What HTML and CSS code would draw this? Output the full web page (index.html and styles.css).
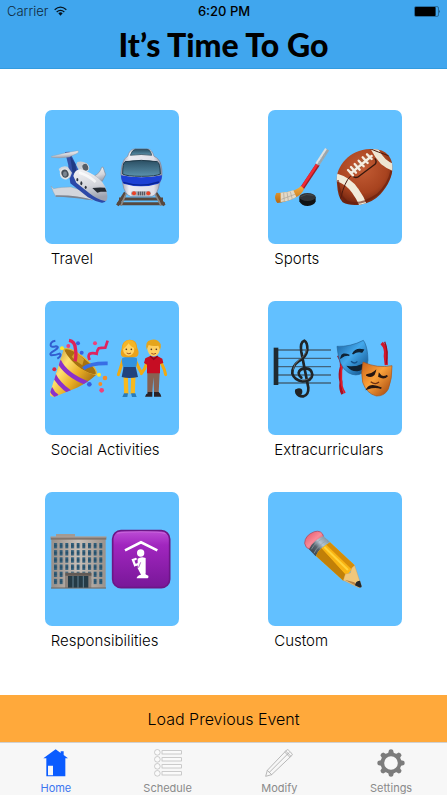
FILE: index.html
```html
<!DOCTYPE html>
<html lang="en">
<head>
<meta charset="utf-8">
<meta name="viewport" content="width=device-width, initial-scale=1">
<title>It’s Time To Go</title>
<link rel="stylesheet" href="styles.css">
</head>
<body>
<header class="header">
  <div class="status">
    <div class="carrier">Carrier
      <svg class="wifi" viewBox="0 0 39 28" aria-hidden="true"><g fill="none" stroke="#06131d" stroke-width="4"><path d="M2 10Q19.500 -5 37 10"/><path d="M8 17Q19.500 7 31 17"/></g><path d="M13 21Q19.500 15 26 21L19.500 28Z" fill="#06131d"/></svg>
    </div>
    <div class="time">6:20 PM</div>
    <svg class="battery" viewBox="0 0 80 32" aria-hidden="true"><rect x="1.500" y="1.500" width="71" height="29" rx="4" fill="none" stroke="#1d4d73" stroke-width="2"/><rect x="3" y="3" width="61" height="26" rx="2"/><path d="M75 11q4 5 0 10z" fill="#173c59"/></svg>
  </div>
  <h1 class="title">It’s Time To Go</h1>
</header>

<main class="cards">
  <button class="card" type="button">
    <svg class="tile" viewBox="16 15 402 402" aria-hidden="true">
      <defs>
        <linearGradient id="hull" x1="0" y1="0" x2="0.200" y2="1"><stop offset="0" stop-color="#f4f4f6"/><stop offset="0.600" stop-color="#d4d6dc"/><stop offset="1" stop-color="#9da2b0"/></linearGradient>
        <linearGradient id="glass" x1="0" y1="0" x2="0" y2="1"><stop offset="0" stop-color="#2b4f63"/><stop offset="1" stop-color="#5b92ad"/></linearGradient>
        <linearGradient id="train" x1="0" y1="0" x2="1" y2="0"><stop offset="0" stop-color="#9a9cab"/><stop offset="0.200" stop-color="#ececf2"/><stop offset="0.800" stop-color="#e0e0e8"/><stop offset="1" stop-color="#8e90a0"/></linearGradient>
      </defs>
      <path d="M165 212Q180 206 186 187L190 186L198 209L187 230Z" fill="url(#hull)" stroke="#858b98" stroke-width="2"/>
      <path d="M76 141L90 140L108 177L120 205L110 228L87 216L86 181Z" fill="#3450a6"/>
      <path d="M91 151L107 177L112 213L99 203Z" fill="#203b85"/>
      <path d="M35 154Q60 148 80 143L115 137Q119 141 113 145L89 156Q58 161 35 157Z" fill="url(#hull)" stroke="#8f969f" stroke-width="1"/>
      <path d="M110 179L113 171Q127 167 141 175L147 189L139 201L120 198Z" fill="#c8ccd2"/>
      <ellipse cx="137" cy="187" rx="10" ry="12" transform="rotate(-22 137 187)" fill="#565d66" stroke="#dadde1" stroke-width="3"/>
      <path d="M34 243L42 251Q62 246 94 246L140 260Q158 270 160 285Q126 276 48 274Q40 261 34 243Z" fill="#d3d6dc" stroke="#8e949f" stroke-width="1"/>
      <path d="M48 271Q115 270 160 286L142 284Q99 276 48 275Z" fill="#7c838f"/>
      <path d="M88 206L112 205L155 250L200 286Q196 294 186 293Q165 289 145 277L92 235Z" fill="#2c49a8"/>
      <path d="M101 213Q105 194 123 193Q151 200 176 220Q201 240 203 272Q204 287 196 288Q172 283 151 266L110 233Z" fill="url(#hull)"/>
      <path d="M57 192Q67 181 84 185L97 203L91 218L68 216Z" fill="#d2d6dc"/>
      <ellipse cx="76" cy="206" rx="13" ry="15" transform="rotate(-20 76 206)" fill="#464e58" stroke="#e0e2e5" stroke-width="5"/>
      <ellipse cx="76" cy="207" rx="6" ry="8" fill="#7c8590"/>
      <path d="M158 249Q173 247 196 248L201 260L183 260L173 263Z" fill="#262c34"/>
      <g fill="#2c323c"><ellipse cx="113" cy="224" rx="3" ry="5"/><ellipse cx="125" cy="235" rx="3" ry="6"/><ellipse cx="138" cy="247" rx="3" ry="5"/></g>
      <path d="M118 203Q143 209 168 231" fill="none" stroke="#fff" stroke-width="8" opacity="0.700"/>
      <path d="M257 263L233 301M348 263L374 301M238 282H370M232 296H376" fill="none" stroke="#57483e" stroke-width="9"/>
      <path d="M260 264L244 302M345 264L364 302" stroke="#8c8680" stroke-width="5"/>
      <path d="M264 154Q270 132 285 132H325Q337 133 343 154Q360 161 364 180Q372 211 360 234Q354 270 337 274H273Q254 269 249 234Q239 205 247 180Q253 158 264 154Z" fill="url(#train)" stroke="#858799" stroke-width="2"/>
      <path d="M272 151Q277 134 287 133H322Q333 134 336 151Q305 146 272 151Z" fill="url(#glass)" stroke="#26404f" stroke-width="2"/>
      <path d="M244 211Q305 223 367 211Q367 229 356 236Q305 252 252 236Q244 227 244 211Z" fill="#1d41d4"/>
      <path d="M251 232Q305 249 358 231" fill="none" stroke="#092594" stroke-width="4"/>
      <path d="M256 170Q305 162 353 170Q361 173 362 207Q349 214 305 214Q260 214 249 207Q249 174 256 170Z" fill="url(#glass)" stroke="#203b4b" stroke-width="3"/>
      <rect x="274" y="259" width="60" height="13" rx="6" fill="#aaaab2"/>
      <g fill="#ec4226"><circle cx="283" cy="265" r="6"/><circle cx="326" cy="265" r="6"/></g>
      <path d="M296 260V271M302 260V271M308 260V271M314 260V271" stroke="#454650" stroke-width="3"/>
    </svg>
    <span class="label">Travel</span>
  </button>

  <button class="card" type="button">
    <svg class="tile" viewBox="16 15 402 402" aria-hidden="true">
      <defs>
        <radialGradient id="ball" cx="0.450" cy="0.350" r="0.700"><stop offset="0" stop-color="#c45d35"/><stop offset="0.600" stop-color="#a8431f"/><stop offset="1" stop-color="#5f1c0b"/></radialGradient>
        <linearGradient id="wood" x1="0" y1="0" x2="0" y2="1"><stop offset="0" stop-color="#f4b045"/><stop offset="1" stop-color="#b8670e"/></linearGradient>
        <clipPath id="ballClip"><path id="ballPath" d="M223 236C215 195 252 134 322 132Q360 130 377 151C401 181 389 228 354 267Q329 294 292 299Q260 303 240 292Q225 276 223 236Z"/></clipPath>
      </defs>
      <path d="M118 250L166 178" stroke="#981f27" stroke-width="12"/>
      <path d="M117 248L164 177" stroke="#f02935" stroke-width="8"/>
      <path d="M164 179L194 133" stroke="#9ca6ac" stroke-width="13"/>
      <path d="M161 176L190 131" stroke="#dce1e3" stroke-width="6"/>
      <path d="M167 170L173 174M174 159L180 163M182 148L188 152" stroke="#aab4ba" stroke-width="2"/>
      <path d="M41 264Q77 263 95 256Q109 250 115 243L124 251Q120 268 94 280Q65 293 44 294Q32 280 41 264Z" fill="url(#wood)"/>
      <path d="M54 263Q76 263 92 256L101 276Q78 289 54 291Z" fill="#e2d9c7"/>
      <path d="M63 263L65 290M73 262L77 287M83 260L89 283M56 283L97 268" stroke="#a9a397" stroke-width="2"/>
      <path d="M110 277V289Q116 303 135 303Q155 302 159 289V276Z" fill="#101214"/>
      <ellipse cx="134.500" cy="276" rx="24.500" ry="12" fill="#303438"/>
      <path d="M114 275Q130 264 152 271" fill="none" stroke="#54585b" stroke-width="2"/>
      <g clip-path="url(#ballClip)">
        <rect x="218" y="128" width="178" height="176" fill="url(#ball)"/>
        <path d="M215 215Q257 226 278 258Q295 281 304 308" fill="none" stroke="#f1ebd9" stroke-width="22"/>
        <path d="M330 122Q344 151 362 170Q379 184 398 190" fill="none" stroke="#eee5d1" stroke-width="20"/>
        <path d="M322 131Q345 141 380 153M234 280Q246 229 264 213" fill="none" stroke="#4b1b10" stroke-width="3"/>
        <path d="M270 214Q281 222 291 212Q316 194 337 178Q344 169 336 160" fill="none" stroke="#38190f" stroke-width="4"/>
        <path d="M226 225Q229 273 252 289Q290 306 344 269Q378 238 386 198" fill="none" stroke="#651d0b" stroke-width="6" opacity="0.600"/>
      </g>
      <path d="M262 204L327 153" stroke="#a85f3c" stroke-width="18"/>
      <path d="M264 205L327 153M256 195L271 211M265 186L280 203M276 177L291 194M288 167L303 184M300 157L315 174M313 148L327 162" stroke="#f5eee1" stroke-width="7" stroke-linecap="round"/>
    </svg>
    <span class="label">Sports</span>
  </button>

  <button class="card" type="button">
    <svg class="tile" viewBox="16 15 402 402" aria-hidden="true">
      <defs>
        <linearGradient id="gold" x1="0" y1="0" x2="1" y2="0.700"><stop offset="0" stop-color="#a66b0c"/><stop offset="0.400" stop-color="#ffe172"/><stop offset="0.650" stop-color="#e9ad24"/><stop offset="1" stop-color="#935d0e"/></linearGradient>
        <clipPath id="coneClip"><path d="M72 160Q91 196 124 218Q149 234 169 237Q145 259 112 275L43 303Q28 302 31 291Z"/></clipPath>
      </defs>
      <path d="M72 160Q88 151 126 180Q174 216 170 235Q161 242 124 221Q77 191 72 160Z" fill="#a57110" stroke="#e4b63a" stroke-width="4"/>
      <path d="M107 168Q119 176 133 190L128 208Q109 197 96 182Z" fill="#d39e2b"/>
      <g clip-path="url(#coneClip)">
        <rect x="25" y="150" width="150" height="155" fill="url(#gold)"/>
        <path d="M58 195Q77 236 143 262M42 235Q55 263 91 289M32 276Q39 293 53 301" fill="none" stroke="#8b31ca" stroke-width="13"/>
      </g>
      <path d="M88 133Q106 136 107 157Q111 180 106 196" fill="none" stroke="#de2257" stroke-width="10"/>
      <path d="M131 218Q150 201 204 202" fill="none" stroke="#386ee5" stroke-width="11"/>
      <path d="M47 134Q31 137 33 149Q34 155 49 151Q62 153 45 163Q26 173 35 178Q47 178 60 173Q68 178 53 188" fill="none" stroke="#315dd0" stroke-width="6"/>
      <path d="M204 134L197 155Q184 155 177 157Q172 163 171 173Q157 169 149 174Q144 180 150 192" fill="none" stroke="#dd2460" stroke-width="8"/>
      <g fill="#ed427b"><circle cx="86" cy="150" r="6"/><circle cx="166" cy="142" r="6"/><circle cx="186" cy="283" r="7"/></g>
      <g fill="#f68b27"><circle cx="196" cy="246" r="7"/><circle cx="182" cy="264" r="6"/></g>
      <g fill="#385edf"><circle cx="115" cy="142" r="6"/><circle cx="126" cy="170" r="6"/><circle cx="149" cy="265" r="7"/></g>
      <g fill="#ffe529"><circle cx="67" cy="157" r="6"/><circle cx="178" cy="236" r="6"/></g><circle cx="44" cy="220" r="6" fill="#d72847"/>
      <path d="M250 192L241 221L236 236M286 192L299 219L306 232M325 190L315 218L305 233M360 190L374 221L378 236" fill="none" stroke="#f0aa13" stroke-width="9" stroke-linecap="round" stroke-linejoin="round"/>
      <path d="M258 239L260 294M281 239L279 294" stroke="#f6b91e" stroke-width="13"/>
      <path d="M253 292L265 292L263 303H248ZM274 292H287L291 303H277Z" fill="#297cba"/>
      <path d="M248 186Q267 178 291 186Q295 198 287 219H252Q244 196 248 186Z" fill="#3192df"/>
      <path d="M252 213H288L295 243Q268 249 246 243Z" fill="#20437d"/>
      <path d="M248 182Q240 176 246 158Q247 132 269 131Q292 130 293 156Q302 176 291 182Q269 186 248 182Z" fill="#e9a21c"/>
      <ellipse cx="267" cy="159" rx="17" ry="20" fill="#ffd465"/>
      <path d="M248 162Q261 151 267 142Q273 153 290 159Q290 134 270 132Q248 133 248 162Z" fill="#f4b527"/>
      <path d="M323 230H360L357 290H343L341 244L338 290H323Z" fill="#866253"/>
      <path d="M324 288H338V302H316Q319 293 324 292ZM343 288H357Q365 295 365 302H343Z" fill="#292126"/>
      <path d="M317 187L332 180Q342 185 353 180L368 188L371 201L361 204V232H322V206L313 201Z" fill="#c60d23"/>
      <path d="M331 180L342 190L354 180" fill="none" stroke="#8e0716" stroke-width="4"/>
      <ellipse cx="342" cy="157" rx="19" ry="24" fill="#ffcf60"/>
      <path d="M321 161Q315 136 333 132Q352 127 363 144Q365 153 361 162L356 149Q339 152 327 147Z" fill="#e5a51c"/>
      <g fill="#51341d"><circle cx="260" cy="160" r="2.500"/><circle cx="275" cy="160" r="2.500"/><circle cx="335" cy="160" r="2.500"/><circle cx="350" cy="160" r="2.500"/></g>
      <path d="M261 171Q268 176 274 171M335 172Q342 177 349 172" fill="none" stroke="#a45522" stroke-width="3"/>
    </svg>
    <span class="label">Social Activities</span>
  </button>

  <button class="card" type="button">
    <svg class="tile" viewBox="16 15 402 402" aria-hidden="true">
      <defs>
        <linearGradient id="blueMask" x1="0" y1="0" x2="1" y2="1"><stop offset="0" stop-color="#185f9d"/><stop offset="0.450" stop-color="#43a9ed"/><stop offset="1" stop-color="#0c477f"/></linearGradient>
        <linearGradient id="orangeMask" x1="0" y1="0" x2="1" y2="1"><stop offset="0" stop-color="#c96118"/><stop offset="0.450" stop-color="#fba23b"/><stop offset="1" stop-color="#9b3e0b"/></linearGradient>
      </defs>
      <path d="M45 162H205M45 187H205M45 212H205M45 237H205M45 261H205" stroke="#42647d" stroke-width="4"/>
      <rect x="33" y="155" width="14" height="112" fill="#1f2a30"/>
      <path d="M105 286Q98 278 102 291Q108 302 122 301Q138 298 137 275L116 168Q111 139 125 134Q135 139 134 162Q131 182 109 195Q87 211 89 233Q95 253 120 256Q147 256 149 236Q147 218 130 217Q110 217 108 231Q108 239 116 245" fill="none" stroke="#202426" stroke-width="8" stroke-linecap="round"/>
      <circle cx="109" cy="287" r="10" fill="#202426"/>
      <path d="M131 158Q131 177 109 192Q92 205 92 221M118 252Q139 253 145 239" fill="none" stroke="#626669" stroke-width="3"/>
      <path d="M227 178Q238 195 236 213Q229 235 235 258Q232 281 240 294" fill="none" stroke="#a90e21" stroke-width="9"/>
      <path d="M237 195Q236 218 236 247Q234 270 247 291" fill="none" stroke="#e11b28" stroke-width="5"/>
      <path d="M357 141Q373 157 368 180L371 207" fill="none" stroke="#d3162a" stroke-width="10"/>
      <path d="M366 137Q378 164 371 203" fill="none" stroke="#9c0c1c" stroke-width="4"/>
      <path d="M223 151Q263 153 302 133Q312 146 315 176Q320 211 299 231Q280 243 257 230Q228 213 223 151Z" fill="url(#blueMask)" stroke="#26669c" stroke-width="2"/>
      <path d="M235 185Q238 168 260 178Q248 175 235 185ZM270 174Q279 156 302 162L298 168Q284 163 270 174ZM256 212Q281 215 303 204Q303 222 284 224Q267 225 256 212Z" fill="#102334" stroke="#102334" stroke-width="4"/>
      <path d="M265 196Q276 206 284 196" fill="none" stroke="#155189" stroke-width="4"/>
      <path d="M301 198Q344 218 388 209Q389 247 377 279Q366 301 341 300Q312 293 300 259Q294 231 301 198Z" fill="url(#orangeMask)" stroke="#aa561b" stroke-width="2"/>
      <path d="M311 237Q326 237 337 227Q333 247 311 237ZM350 235Q359 248 374 239Q364 250 349 241ZM314 278Q325 261 356 277Q338 270 314 278Z" fill="#281711" stroke="#281711" stroke-width="5"/>
      <path d="M324 257Q338 268 349 258" fill="none" stroke="#6f3011" stroke-width="4"/>
    </svg>
    <span class="label">Extracurriculars</span>
  </button>

  <button class="card" type="button">
    <svg class="tile" viewBox="16 15 402 402" aria-hidden="true">
      <defs>
        <linearGradient id="wall" x1="0" y1="0" x2="1" y2="0"><stop offset="0" stop-color="#978f89"/><stop offset="0.500" stop-color="#c9c0b8"/><stop offset="1" stop-color="#99918b"/></linearGradient>
        <linearGradient id="violet" x1="0" y1="0" x2="0" y2="1"><stop offset="0" stop-color="#bd4ed6"/><stop offset="0.250" stop-color="#a126bf"/><stop offset="1" stop-color="#781798"/></linearGradient>
        <pattern id="windows" x="43" y="168" width="17" height="21.500" patternUnits="userSpaceOnUse"><rect width="9" height="16" fill="#315d79"/><path d="M0 8H9" stroke="#183b52" stroke-width="2"/></pattern>
      </defs>
      <rect x="49" y="141" width="57" height="12" fill="#a39a93"/>
      <rect x="35" y="156" width="163" height="148" fill="url(#wall)"/>
      <rect x="43" y="168" width="147" height="125" fill="url(#windows)"/>
      <rect x="33" y="149" width="167" height="9" fill="#80756e"/>
      <path d="M33 150H200" stroke="#b8aca4" stroke-width="3"/>
      <rect x="76" y="257" width="79" height="46" fill="#8c837d"/>
      <rect x="85" y="267" width="61" height="36" fill="#253b46"/>
      <path d="M100 267V303M115 267V303M131 267V303" stroke="#648393" stroke-width="3"/>
      <path d="M77 258H155V266H77Z" fill="#625a55"/>
      <path d="M34 303H199" stroke="#6b6663" stroke-width="3"/>
      <rect x="219" y="131" width="171" height="171" rx="25" fill="url(#violet)" stroke="#6c1687" stroke-width="5"/>
      <path d="M231 139Q249 134 304 134Q363 134 378 140" fill="none" stroke="#ce72df" stroke-width="4" opacity="0.600"/>
      <path d="M256 190L304 166L353 190" fill="none" stroke="#fff" stroke-width="8"/>
      <circle cx="303" cy="198" r="11" fill="#fff"/>
      <path d="M294 215Q305 207 318 213V258Q315 263 326 266Q328 271 324 274H291Q291 266 304 263L294 244Z" fill="#fff"/>
      <path d="M296 231L286 235L280 219L288 216" fill="none" stroke="#fff" stroke-width="7" stroke-linecap="round"/>
      <path d="M303 226L297 241L286 238" fill="none" stroke="#8c27ab" stroke-width="2"/>
    </svg>
    <span class="label">Responsibilities</span>
  </button>

  <button class="card" type="button">
    <svg class="tile" viewBox="16 15 402 402" aria-hidden="true">
      <defs>
        <linearGradient id="eraser" x1="0" y1="0" x2="1" y2="1"><stop offset="0" stop-color="#df4e61"/><stop offset="0.500" stop-color="#fa8b99"/><stop offset="1" stop-color="#b43148"/></linearGradient>
        <linearGradient id="metal" x1="0" y1="1" x2="1" y2="0"><stop offset="0" stop-color="#2d3640"/><stop offset="0.400" stop-color="#56616a"/><stop offset="0.600" stop-color="#b4c4d2"/><stop offset="1" stop-color="#667b8b"/></linearGradient>
      </defs>
      <path d="M126 169Q126 145 155 134Q177 128 183 149L141 187Q128 183 126 169Z" fill="url(#eraser)" stroke="#a94156" stroke-width="2"/>
      <path d="M182 147L202 165Q190 170 181 179Q167 190 159 208L139 187Q151 160 182 147Z" fill="url(#metal)"/>
      <path d="M146 187Q158 164 187 151M154 199Q164 177 195 158" fill="none" stroke="#96a4ae" stroke-width="2"/>
      <path d="M160 207Q170 184 202 166L276 235L242 281Z" fill="#ffb817"/>
      <path d="M160 207Q165 192 177 183L248 262L242 281Z" fill="#c18008"/>
      <path d="M177 184Q183 178 191 173L265 240L249 261Z" fill="#f9b414"/>
      <path d="M191 173L202 166L276 235L266 246Z" fill="#d58d09"/>
      <path d="M185 180L256 249" stroke="#ffd43c" stroke-width="6"/>
      <path d="M242 280L248 261L263 258L267 243L276 235L296 296Q296 302 288 302Z" fill="#f0c77b" stroke="#c78f48" stroke-width="1"/>
      <path d="M246 278L287 300L275 286Z" fill="#b98345"/>
      <path d="M279 289Q281 281 292 281L297 298Q297 303 289 301L277 295Z" fill="#24272b"/>
    </svg>
    <span class="label">Custom</span>
  </button>
</main>

<button class="load" type="button">Load Previous Event</button>

<nav class="tabs" aria-label="Main">
  <a class="tab active" href="#home" aria-current="page">
    <svg class="icon" viewBox="0 0 84 84" aria-hidden="true"><path fill="#0b5cff" fill-rule="evenodd" d="M4 28L41 1L56 12V7H65V18L78 28H70V82H13V28ZM18 50V79H33V50Z"/></svg>
    Home
  </a>
  <a class="tab" href="#schedule">
    <svg class="icon" viewBox="0 0 84 84" aria-hidden="true"><g fill="#fafafa" stroke="#b5b5b5" stroke-width="2"><circle cx="10" cy="10" r="8.500"/><circle cx="10" cy="31" r="8.500"/><circle cx="10" cy="52" r="8.500"/><circle cx="10" cy="73" r="8.500"/><rect x="24" y="5" width="58" height="10"/><rect x="24" y="26" width="58" height="10"/><rect x="24" y="47" width="58" height="10"/><rect x="24" y="68" width="58" height="10"/></g></svg>
    Schedule
  </a>
  <a class="tab" href="#modify">
    <svg class="icon" viewBox="0 0 84 84" aria-hidden="true"><path d="M2 82L7 64L65 3Q67 1 70 3L81 14Q83 17 81 19L20 77ZM7 64L20 77M13 70L73 10M59 9L75 25M62 6L78 22" fill="none" stroke="#999" stroke-width="2"/></svg>
    Modify
  </a>
  <a class="tab" href="#settings">
    <svg class="icon" viewBox="0 0 84 84" aria-hidden="true"><circle cx="42" cy="42" r="26" fill="none" stroke="#7c7c7c" stroke-width="11"/><g fill="#7c7c7c"><path id="tooth" d="M33 14L36 3Q42 -1 48 3L51 14Z"/><use href="#tooth" transform="rotate(45 42 42)"/><use href="#tooth" transform="rotate(90 42 42)"/><use href="#tooth" transform="rotate(135 42 42)"/><use href="#tooth" transform="rotate(180 42 42)"/><use href="#tooth" transform="rotate(225 42 42)"/><use href="#tooth" transform="rotate(270 42 42)"/><use href="#tooth" transform="rotate(315 42 42)"/></g></svg>
    Settings
  </a>
</nav>
</body>
</html>
```
FILE: styles.css
```css
* {
  box-sizing: border-box;
}

body {
  margin: 0;
  min-height: 100vh;
  display: flex;
  flex-direction: column;
  background: #fff;
  color: #000;
  font-family: Inter, "Liberation Sans", sans-serif;
}

button {
  margin: 0;
  border: 0;
  color: inherit;
  font: inherit;
  cursor: pointer;
}

.header {
  background: #40a6ee;
  border-bottom: 1px solid #329bdf;
}

.status {
  display: grid;
  grid-template-columns: 1fr auto 1fr;
  align-items: center;
  height: 22px;
  padding: 0 6px 0 7px;
  line-height: 22px;
}

.carrier {
  display: flex;
  align-items: center;
  gap: 6px;
  color: #102a3c;
  font-size: 13px;
  font-weight: 300;
}

.wifi {
  width: 13px;
  height: 10px;
}

.time {
  font-size: 13px;
  font-weight: 500;
}

.battery {
  justify-self: end;
  width: 27px;
  height: 11px;
}

.title {
  margin: 0;
  height: 46px;
  font-family: Lato, "Liberation Sans", sans-serif;
  font-size: 32px;
  font-weight: 900;
  line-height: 46px;
  text-align: center;
}

.cards {
  flex: 1;
  display: grid;
  grid-template-columns: 1fr 1fr;
  align-content: start;
  justify-items: center;
  gap: 32px 0;
  padding: 41px 0 32px;
}

.card {
  display: flex;
  flex-direction: column;
  gap: 5px;
  padding: 0;
  background: none;
  text-align: left;
}

.tile {
  display: block;
  width: 134px;
  height: 134px;
  border-radius: 7px;
  background: #62c0ff;
}

.label {
  padding-left: 6px;
  font-size: 15px;
  font-weight: 300;
  line-height: 20px;
}

.load {
  height: 47px;
  background: #ffa93b;
  font-size: 16px;
  font-weight: 300;
}

.tabs {
  display: grid;
  grid-template-columns: repeat(4, 1fr);
  height: 53px;
  padding-top: 6px;
  border-top: 1px solid #d0d0d0;
  background: #f7f7f7;
}

.tab {
  display: flex;
  flex-direction: column;
  align-items: center;
  gap: 4px;
  color: #8a8a8a;
  font-size: 11px;
  line-height: 14px;
  text-decoration: none;
}

.tab.active {
  color: #3b76f0;
}

.icon {
  width: 28px;
  height: 28px;
}
```
